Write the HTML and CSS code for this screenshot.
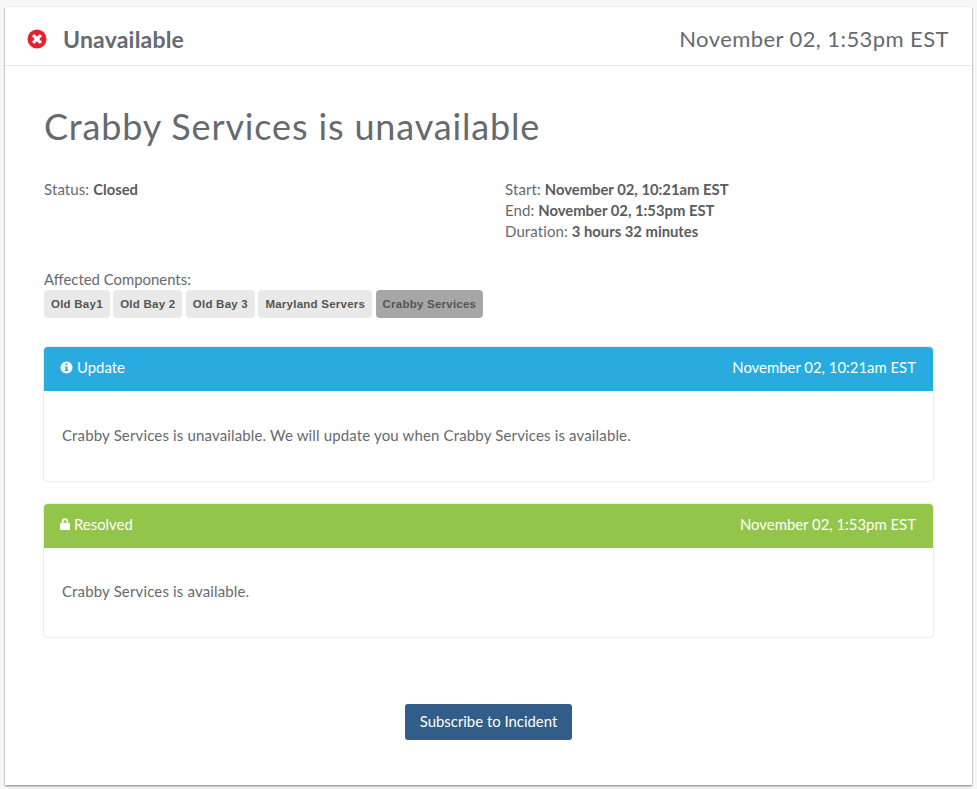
FILE: index.html
```html
<!DOCTYPE html>
<html lang="en">
<head>
<meta charset="utf-8">
<title>Crabby Services is unavailable</title>
<link rel="stylesheet" href="styles.css">
</head>
<body>
<main class="card">
  <header class="top">
    <div class="state">
      <svg class="state-icon" viewBox="0 0 20 20" aria-hidden="true"><circle cx="10" cy="10" r="9.500" fill="#e8202e"/><path d="M7.200 7.200l5.600 5.600M12.800 7.200l-5.600 5.600" stroke="#fff" stroke-width="3.200" stroke-linecap="square"/></svg>
      <span class="state-label">Unavailable</span>
    </div>
    <div class="top-date">November 02, 1:53pm EST</div>
  </header>
  <div class="content">
    <h1 class="title">Crabby Services is unavailable</h1>
    <div class="meta">
      <div class="meta-col">Status: <b>Closed</b></div>
      <div class="meta-col">
        <div>Start: <b>November 02, 10:21am EST</b></div>
        <div>End: <b>November 02, 1:53pm EST</b></div>
        <div>Duration: <b>3 hours 32 minutes</b></div>
      </div>
    </div>
    <div class="affected-label">Affected Components:</div>
    <div class="tags">
      <span class="tag">Old Bay1</span>
      <span class="tag">Old Bay 2</span>
      <span class="tag">Old Bay 3</span>
      <span class="tag">Maryland Servers</span>
      <span class="tag tag-active">Crabby Services</span>
    </div>
    <section class="panel">
      <div class="panel-head head-blue">
        <span class="panel-name"><svg class="panel-icon" viewBox="0 0 14 14" aria-hidden="true"><path fill="#fff" fill-rule="evenodd" d="M7 .5a6.500 6.500 0 1 1 0 13 6.500 6.500 0 0 1 0-13zM5.900 2.600v2.100h2.200V2.600zM5 5.800v1.200h.9v2.600H5v1.300h4V9.600h-.9V5.800z"/></svg>Update</span>
        <span>November 02, 10:21am EST</span>
      </div>
      <div class="panel-body body-first">Crabby Services is unavailable. We will update you when Crabby Services is available.</div>
    </section>
    <section class="panel">
      <div class="panel-head head-green">
        <span class="panel-name"><svg class="panel-icon lock" viewBox="0 0 11 13" aria-hidden="true"><path fill="#fff" fill-rule="evenodd" d="M2 5.500V3.700a3.500 3.500 0 0 1 7 0v1.800h.9c.6 0 1.100.5 1.100 1.100v5.300c0 .6-.5 1.100-1.100 1.100H1.100C.5 13 0 12.500 0 11.900V6.600c0-.6.5-1.100 1.100-1.100zm1.800 0h3.400V3.700a1.700 1.700 0 0 0-3.400 0z"/></svg>Resolved</span>
        <span>November 02, 1:53pm EST</span>
      </div>
      <div class="panel-body">Crabby Services is available.</div>
    </section>
    <div class="actions"><a class="btn" href="#">Subscribe to Incident</a></div>
  </div>
</main>
</body>
</html>
```
FILE: styles.css
```css
* { box-sizing: border-box; }
html, body { height: 100%; }
body {
  margin: 0;
  padding: 7px 5px 4px;
  background: #f7f7f7;
  color: #666a6e;
  font-family: Lato, "Open Sans", sans-serif;
  font-size: 15px;
  line-height: 20px;
  overflow: hidden;
}
.card {
  height: 778px;
  background: #fff;
  box-shadow: 0 1px 2px rgba(0,0,0,.5);
}
.top {
  height: 59px;
  padding: 6px 23px 0 22px;
  border-bottom: 1px solid #e6e7e9;
  display: flex;
  align-items: center;
  justify-content: space-between;
  color: #666a70;
}
.state { display: flex; align-items: center; gap: 16px; }
.state-icon { width: 20px; height: 20px; display: block; }
.state-label { font-size: 23px; font-weight: 700; letter-spacing: .2px; }
.top-date { font-size: 22px; letter-spacing: .42px; }
.content { padding: 37px 39px 0; }
.title {
  margin: 0;
  font-size: 36px;
  line-height: 46px;
  font-weight: 400;
  letter-spacing: .85px;
  color: #666a6e;
}
.meta { display: grid; grid-template-columns: 461px 1fr; margin-top: 30px; line-height: 21px; letter-spacing: .1px; }
.meta b { color: #595c60; font-size: 14.800px; letter-spacing: 0; }
.affected-label { margin-top: 27px; line-height: 21px; font-size: 14.900px; }
.tags { display: flex; gap: 3.400px; }
.tag {
  height: 28px;
  padding: 0 7px;
  background: #e9e9e9;
  color: #555;
  border-radius: 4px;
  font: 700 11.500px/29px "Liberation Sans", sans-serif;
  letter-spacing: .24px;
}
.tag-active { background: #a6a6a6; }
.panel {
  margin-top: 23px;
  background: #fff;
  border-radius: 4px;
  box-shadow: 0 0 2px rgba(0,0,0,.25);
  overflow: hidden;
}
.tags + .panel { margin-top: 29px; }
.panel-head {
  height: 44px;
  padding: 0 17px 4px 16px;
  display: flex;
  align-items: center;
  justify-content: space-between;
  color: #fff;
  font-size: 14.900px;
}
.panel-name { display: flex; align-items: center; gap: 4px; }
.panel-icon { width: 13px; height: 13px; display: block; }
.lock { width: 10px; height: 12px; }
.head-blue { background: #29abe0; }
.head-green { background: #93c54b; }
.panel-body { padding: 33px 18px 0; height: 89px; letter-spacing: .15px; }
.body-first { padding-top: 34px; height: 90px; }
.actions { display: flex; justify-content: center; margin-top: 67px; }
.btn {
  width: 167px;
  height: 36px;
  background: #325d88;
  color: #fff;
  border-radius: 3px;
  text-decoration: none;
  text-align: center;
  font-size: 14.900px;
  line-height: 34px;
}
```
